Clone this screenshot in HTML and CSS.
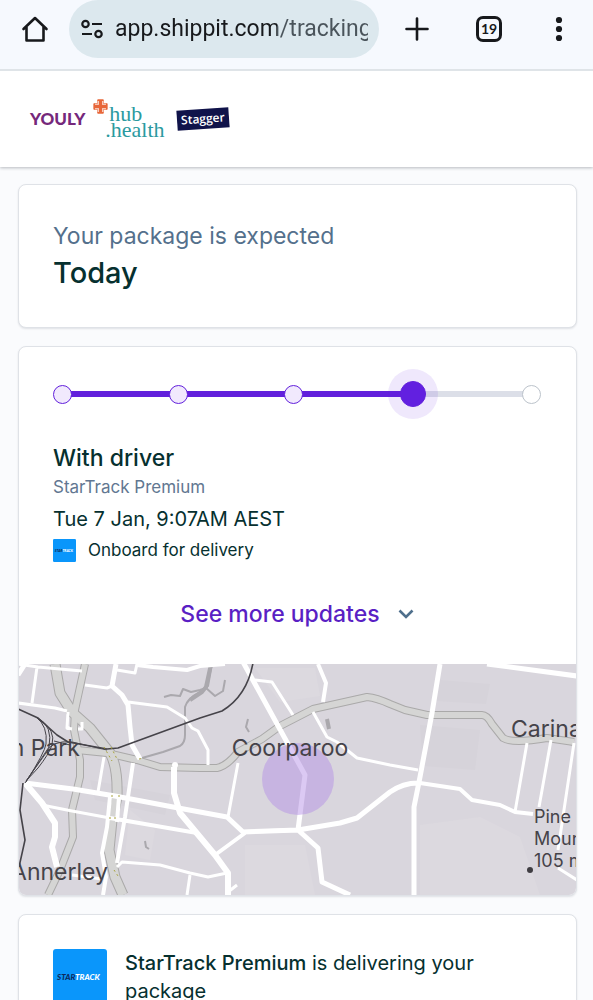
FILE: index.html
```html
<!DOCTYPE html>
<html lang="en">
<head>
<meta charset="utf-8">
<meta name="viewport" content="width=device-width, initial-scale=1">
<title>Track your package</title>
<link rel="stylesheet" href="styles.css">
</head>
<body>
<div class="toolbar">
  <button class="tool" type="button" aria-label="Home">
    <svg width="28" height="28" viewBox="0 0 28 28" fill="none" stroke="#17191c" stroke-width="2.6" stroke-linejoin="round" stroke-linecap="round"><path d="M2.500 14 14 3 25.500 14M5.500 12v13.500h17V12"/></svg>
  </button>
  <div class="address">
    <svg width="22" height="20" viewBox="0 0 22 20" fill="none" stroke="#17191c" stroke-width="2.200"><circle cx="4.500" cy="5" r="3.200"/><path d="M11 5h10M1 15h10"/><circle cx="17.500" cy="15" r="3.200"/></svg>
    <input class="url" type="text" aria-label="Address" value="app.shippit.com/tracking">
  </div>
  <button class="tool" type="button" aria-label="New tab">
    <svg width="24" height="24" viewBox="0 0 24 24" stroke="#17191c" stroke-width="2.600" stroke-linecap="round"><path d="M12 1.500v21M1.500 12h21"/></svg>
  </button>
  <button class="tool tabs" type="button" aria-label="19 open tabs"><span class="tab-count">19</span></button>
  <button class="tool" type="button" aria-label="Menu">
    <svg width="8" height="26" viewBox="0 0 8 26" fill="#17191c"><circle cx="4" cy="4" r="3.100"/><circle cx="4" cy="13" r="3.100"/><circle cx="4" cy="22" r="3.100"/></svg>
  </button>
</div>
<div class="viewport">
  <header class="brands">
    <span class="youly">YOULY</span>
    <span class="hub">
      <svg class="hub-mark" width="15" height="15" viewBox="0 0 15 15" fill="none" stroke="#e8673a" stroke-width="1.700"><path d="M4.500 1.200h2.200v5.500H1.200V4.500M10.500 1.200H8.300v5.500h5.500V4.500M4.500 13.800h2.200V8.300H1.200v2.200M10.500 13.800H8.300V8.300h5.500v2.200"/><path stroke-width="1.200" d="M4.700 1v3.700H1M10.300 1v3.700H14M4.700 14v-3.700H1M10.300 14v-3.700H14" stroke-opacity=".65"/></svg>
      <span class="hub-name first">hub</span>
      <span class="hub-name">.health</span>
    </span>
    <span class="stagger">Stagger</span>
  </header>
  <main class="content">
    <section class="card expected">
      <p class="lead">Your package is expected</p>
      <h1 class="day">Today</h1>
    </section>
    <section class="card status">
      <div class="details">
        <ol class="progress" aria-label="Delivery progress">
          <li class="step"></li>
          <li class="step"></li>
          <li class="step"></li>
          <li class="step current" aria-current="step"></li>
          <li class="step pending"></li>
        </ol>
        <h2 class="state">With driver</h2>
        <p class="service">StarTrack Premium</p>
        <p class="time">Tue 7 Jan, 9:07AM AEST</p>
        <p class="event">
          <svg class="badge" viewBox="0 0 54 54" role="img" aria-label="StarTrack"><rect width="54" height="54" rx="3" fill="#0a96fb"/><text class="logo-text" x="4" y="31"><tspan fill="#0c2a5c">STAR</tspan><tspan fill="#fff">TRACK</tspan></text></svg>
          Onboard for delivery
        </p>
        <button class="more" type="button">See more updates
          <svg width="16" height="10" viewBox="0 0 16 10" fill="none" stroke="#4f6f8c" stroke-width="2.600"><path d="m1.500 1.500 6.500 6.500 6.500-6.500"/></svg>
        </button>
      </div>
      <svg class="map" viewBox="19 664 557 231" preserveAspectRatio="xMidYMid slice" role="img" aria-label="Map of Coorparoo">
        <rect x="19" y="664" width="557" height="231" fill="#d9d6dd"/>
        <g fill="#dcd9df">
          <path d="M420 825l60-8 40 20 20 58H420zM130 810l25 20-5 30-25-5zM255 668l60 0 5 28-40 6zM245 845l60 0 10 50h-70z"/>
        </g>
        <g fill="#d6d3da"><path d="M90 780l80 15-5 20-70-15zM420 725l60 5-5 40-52-4zM440 680l50 4-4 20-50-3z"/></g>
        <g class="creek">
          <path stroke-width="2" d="M142 758l21-6 17-6q5-3 5-11v-28q2-8 15-15l8-6 4-22"/>
          <path stroke-width="2" d="M164 697l7-2 9 1 3-7 8 3 9-2 6-2 9 8 8-5 2-11M248 719l-2 8 3 5M145 841l1 6 3 2"/>
          <path stroke-width="4" d="M190 700l12-8 4-5 5-23M327 719l2 10"/>
        </g>
        <g class="casing">
          <path stroke-width="11" d="M55 664l5 29 12 19 18 16 20 25q8 14 7 44l-5 23-3 30 6 27 8 18"/>
          <path stroke-width="8" d="M85 664 75 710l-1 20 6 30v17l-8 33 1 27-13 33-12 25"/>
          <path stroke-width="8" d="M77 750l30 3 30 7 23 7 40 1h17q10-2 21-16l24-13 18-13 33-17 54-12q10 1 23 7l15 6 22 5h55q5 0 10 9l11 14q9 6 44 0l27 4"/>
        </g>
        <g class="motorway">
          <path stroke-width="9" d="M55 664l5 29 12 19 18 16 20 25q8 14 7 44l-5 23-3 30 6 27 8 18"/>
          <path stroke-width="6" d="M85 664 75 710l-1 20 6 30v17l-8 33 1 27-13 33-12 25"/>
          <path stroke-width="6" d="M77 750l30 3 30 7 23 7 40 1h17q10-2 21-16l24-13 18-13 33-17 54-12q10 1 23 7l15 6 22 5h55q5 0 10 9l11 14q9 6 44 0l27 4"/>
        </g>
        <g class="road">
          <path stroke-width="3" d="M18 664l20 3 44 4M37 667l-5 36M18 703l37 5 12 3M68 712l-1 16 5 1M78 729l4 0 0-7M85 685l22 3 5-2M117 670l18 3 2-9M128 702l39 5 18 11 7 10 6 3 10 19v15M104 757l-6 35M117 867l5-5 38 3 30 8 18 4 19-4M190 875l-3 20M228 817l10-54M255 680l17 2 21 33M313 712l14 25 10 5 20 16 33 7 28 5M527 743l-12 69M551 740l-12 67M574 743l-16 107M558 868l19 12M42 805l30 6 38 7M72 875l30 4M228 892l9-7"/>
          <path stroke-width="4" d="M133 763l-8 54-8 46M110 797l-3 30-5 26 4 24-3 18M119 797l-2 25M110 818l87 15M245 833l-30 22M318 664l8 19-3 19M420 783l40 6 12 11 28 5 15 7 18 2M137 665l16 2 34 3 13-4 25-2M243 832l52-2"/>
          <path stroke-width="5" d="M25 783l48 6 42 7 58 11 54 10 16 15 55-2 42-7 17-5 33-26q13-9 28-9M116 664l-4 22 10 9 6 10 2 22 2 18 8 14M243 662l62 113-7 55 20 18 4 34 28 13M440 664l-8 49-12 64-6 30v88M487 664l90 12M25 664l-7 11"/>
          <path stroke-width="6" d="M25 783l17 20 13 20v14l-3 10 5 20M174 767l0 26 6 20 35 42 13 18v22"/>
        </g>
        <g class="rail">
          <path stroke-width="1.600" d="M18 709l20 9 19 17 11 7 39 7 11-1 82-30 22-7q25-15 31-48M23 783l-3 27 5 30-6 27"/>
          <path d="M38 718q15 8 11 29L25 783M40 720q16 10 12 25-3 9-14 23l-12 13M36 717q12 9 10 27-1 8-20 38M107 750l-35-8q-21-2-26 11L26 781M70 745l-16-4"/>
        </g>
        <circle cx="68" cy="728" r="2" fill="#fff"/><circle cx="175" cy="765" r="3" fill="#fff"/>
        <g fill="none" stroke="#a9a43d" stroke-width="1" stroke-dasharray="2 3"><path d="M104 747l8 14M111 747l6 12M112 795v5M119 795v5M109 818h8M114 870l4 6M139 759l5-1"/></g>
        <circle cx="298" cy="779" r="36" fill="#b38ee6" fill-opacity=".48"/>
        <g class="labels">
          <text x="290" y="756" text-anchor="middle">Coorparoo</text>
          <text x="80" y="756" text-anchor="end">Dutton Park</text>
          <text x="108" y="880" text-anchor="end">Annerley</text>
          <text x="511" y="737">Carina</text>
          <g class="small"><text x="534" y="823">Pine</text><text x="534" y="845">Mountain</text><text x="534" y="867">105 m</text></g>
        </g>
        <circle cx="530" cy="870" r="3" fill="#3f3d42"/>
      </svg>
    </section>
    <section class="card courier">
      <svg class="courier-logo" viewBox="0 0 54 54" role="img" aria-label="StarTrack"><rect width="54" height="54" rx="3" fill="#0a96fb"/><text class="logo-text" x="4" y="31"><tspan fill="#0c2a5c">STAR</tspan><tspan fill="#fff">TRACK</tspan></text></svg>
      <p class="courier-text"><strong>StarTrack Premium</strong> is delivering your package</p>
    </section>
  </main>
</div>
</body>
</html>
```
FILE: styles.css
```css
* { box-sizing: border-box; }
body {
  margin: 0;
  height: 100vh;
  display: flex;
  flex-direction: column;
  overflow: hidden;
  background: #fafbfd;
  color: #06302f;
  font-family: Inter, sans-serif;
}
h1, h2, p, ol { margin: 0; padding: 0; font-weight: 400; }
button { border: 0; padding: 0; background: none; color: inherit; font: inherit; }
svg { display: block; flex: none; }

.toolbar {
  flex: none;
  display: flex;
  align-items: flex-start;
  height: 71px;
  padding: 0 20px 0 21px;
  border-bottom: 2px solid #dfe4e8;
  background: #f6f9fe;
}
.tool { display: flex; align-items: center; justify-content: center; width: 28px; height: 58px; }
.address {
  flex: 1;
  min-width: 0;
  display: flex;
  align-items: center;
  gap: 12px;
  height: 58px;
  margin: 0 24px 0 20px;
  padding: 0 11px 0 12px;
  border-radius: 29px;
  background: #dce8ee;
}
.url {
  flex: 1;
  min-width: 0;
  padding: 0;
  border: 0;
  outline: 0;
  background: linear-gradient(90deg, #17191c 162px, #4a545b 162px);
  background-clip: text;
  color: transparent;
  font: 23px/32px Roboto, sans-serif;
}
.tabs { margin: 0 42px 0 44px; }
.tab-count {
  width: 26px;
  height: 26px;
  border: 3px solid #17191c;
  border-radius: 7px;
  color: #17191c;
  font: 700 14px/20px Lato, sans-serif;
}

.viewport { flex: 1; min-height: 0; overflow-y: auto; scrollbar-width: none; }
.brands {
  display: flex;
  align-items: center;
  height: 96px;
  padding-left: 30px;
  background: #fff;
  box-shadow: 0 1px 3px rgba(30, 40, 50, .3);
}
.youly { color: #75287b; font: 900 17px/20px Lato, sans-serif; }
.hub { position: relative; display: flex; flex-direction: column; margin: 6px 0 0 20px; color: #2b9aa0; }
.hub-mark { position: absolute; left: -12px; top: -7px; }
.hub-name { font: 22px/16px "Liberation Serif", serif; }
.first { padding-left: 4px; }
.stagger {
  margin-left: 12px;
  padding: 0 4px;
  background: #10134a;
  color: #fff;
  font: 600 12px/20px "Open Sans", sans-serif;
  transform: rotate(-4deg);
}

.content { display: flex; flex-direction: column; gap: 18px; padding: 17px 16px 18px 18px; }
.card {
  border: 1px solid #dfe2e7;
  border-radius: 8px;
  background: #fff;
  box-shadow: 0 1px 2px rgba(30, 40, 60, .12);
  overflow: hidden;
}
.expected { padding: 34px; }
.lead { color: #54708c; font-size: 23px; line-height: 34px; }
.day { font-size: 29px; line-height: 40px; font-weight: 500; }

.details { display: flex; flex-direction: column; padding: 37px 35px 34px 34px; }
.progress {
  position: relative;
  z-index: 0;
  display: flex;
  align-items: center;
  justify-content: space-between;
  height: 20px;
  margin-bottom: 38px;
  list-style: none;
}
.step { position: relative; flex: none; width: 19px; height: 19px; border: 1px solid #6220dc; border-radius: 50%; background: #f1e9fd; }
.step + .step::before { content: ""; position: absolute; right: 100%; width: 99px; height: 6px; top: calc(50% - 3px); background: #6220dc; z-index: -1; }
.current { width: 26px; height: 26px; background: #6220e0; box-shadow: 0 0 0 12px rgba(98, 32, 224, .1); }
.pending { border-color: #bcc3cb; background: #fff; }
.step.pending::before { background: #dcdfe8; }
.state { font-size: 23px; line-height: 32px; font-weight: 500; }
.service { color: #627791; font-size: 17px; line-height: 26px; }
.time { font-size: 20px; line-height: 38px; }
.event { display: flex; align-items: center; gap: 12px; font-size: 17px; line-height: 24px; }
.badge { width: 23px; height: 23px; }
.more { display: flex; align-items: center; align-self: center; gap: 18px; margin-top: 36px; color: #5a1fc4; font-size: 23px; line-height: 32px; font-weight: 500; }
.logo-text { font: italic 900 8px Lato, sans-serif; }

.map { width: 100%; height: auto; }
.road, .casing, .motorway, .rail, .creek { fill: none; stroke-linejoin: round; }
.road { stroke: #fff; }
.casing { stroke: #aaa9a9; }
.motorway { stroke: #d5d5d4; }
.rail { stroke: #454349; }
.creek { stroke: #aaa8ad; }
.labels { fill: #454349; font-family: Inter, sans-serif; font-size: 23px; }
.small { font-size: 18px; }

.courier { display: flex; gap: 18px; padding: 34px; }
.courier-logo { width: 54px; height: 54px; }
.courier-text { font-size: 20px; line-height: 28px; }
.courier-text strong { font-weight: 500; }
```
